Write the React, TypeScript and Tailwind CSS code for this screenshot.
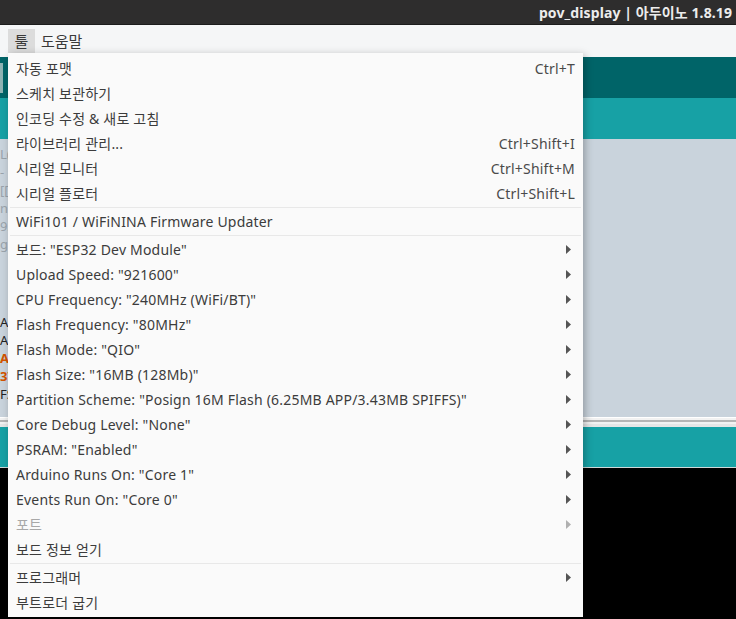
import React from 'react'

type Item =
  | { kind: 'item'; label: string; shortcut?: string; sub?: boolean; disabled?: boolean }
  | { kind: 'sep' }

const items: Item[] = [
  { kind: 'item', label: '자동 포맷', shortcut: 'Ctrl+T' },
  { kind: 'item', label: '스케치 보관하기' },
  { kind: 'item', label: '인코딩 수정 & 새로 고침' },
  { kind: 'item', label: '라이브러리 관리...', shortcut: 'Ctrl+Shift+I' },
  { kind: 'item', label: '시리얼 모니터', shortcut: 'Ctrl+Shift+M' },
  { kind: 'item', label: '시리얼 플로터', shortcut: 'Ctrl+Shift+L' },
  { kind: 'sep' },
  { kind: 'item', label: 'WiFi101 / WiFiNINA Firmware Updater' },
  { kind: 'sep' },
  { kind: 'item', label: '보드: "ESP32 Dev Module"', sub: true },
  { kind: 'item', label: 'Upload Speed: "921600"', sub: true },
  { kind: 'item', label: 'CPU Frequency: "240MHz (WiFi/BT)"', sub: true },
  { kind: 'item', label: 'Flash Frequency: "80MHz"', sub: true },
  { kind: 'item', label: 'Flash Mode: "QIO"', sub: true },
  { kind: 'item', label: 'Flash Size: "16MB (128Mb)"', sub: true },
  { kind: 'item', label: 'Partition Scheme: "Posign 16M Flash (6.25MB APP/3.43MB SPIFFS)"', sub: true },
  { kind: 'item', label: 'Core Debug Level: "None"', sub: true },
  { kind: 'item', label: 'PSRAM: "Enabled"', sub: true },
  { kind: 'item', label: 'Arduino Runs On: "Core 1"', sub: true },
  { kind: 'item', label: 'Events Run On: "Core 0"', sub: true },
  { kind: 'item', label: '포트', sub: true, disabled: true },
  { kind: 'item', label: '보드 정보 얻기' },
  { kind: 'sep' },
  { kind: 'item', label: '프로그래머', sub: true },
  { kind: 'item', label: '부트로더 굽기' },
]

function Arrow({ disabled }: { disabled?: boolean }) {
  return (
    <svg width="5" height="9" viewBox="0 0 5 9" className="shrink-0">
      <polygon points="0,0 5,4.5 0,9" fill={disabled ? '#b0b0b0' : '#555555'} />
    </svg>
  )
}

export default function App() {
  return (
    <div
      className="relative w-[736px] h-[619px] overflow-hidden flex flex-col bg-black"
      style={{ fontFamily: '"Noto Sans", "Noto Sans CJK KR", sans-serif' }}
    >
      {/* title bar */}
      <div className="h-[25px] shrink-0 bg-[#2e2d2d] border-b border-[#1c1c1c] flex items-center justify-end pr-[4px]">
        <span className="text-[14px] font-bold text-[#ececec] tracking-[0.1px]">pov_display | 아두이노 1.8.19</span>
      </div>

      {/* menu bar */}
      <div className="h-[32px] shrink-0 bg-[#f5f6f7] flex items-center pl-[8px] text-[15px] text-[#3a3a3a]">
        <div className="h-[25px] w-[27px] bg-[#dcdcdc] flex items-center justify-center">툴</div>
        <div className="ml-[6px]">도움말</div>
      </div>

      {/* toolbar */}
      <div className="h-[41px] shrink-0 bg-[#006468] flex items-center">
        <div className="w-[3px] h-[30px] bg-[#8fb3b4]" />
      </div>

      {/* tabs */}
      <div className="h-[41px] shrink-0 bg-[#17a1a5]" />

      {/* editor */}
      <div className="h-[278px] shrink-0 bg-[#c9d3dc] flex flex-col pt-[6px] text-[13px] leading-[18px] text-[#9aa3ab] whitespace-nowrap">
        <div>L(</div>
        <div>-</div>
        <div>[[</div>
        <div>n</div>
        <div>92</div>
        <div>gh</div>
        <div className="h-[60px]" />
        <div className="text-[#222]">Ac</div>
        <div className="text-[#222]">Ac</div>
        <div className="text-[#d35400] font-bold">Ac</div>
        <div className="text-[#d35400] font-bold">3T</div>
        <div className="text-[#222]">FS</div>
      </div>

      {/* divider */}
      <div className="h-[10px] shrink-0 bg-[#c9d3dc] flex flex-col">
        <div className="h-px bg-white" />
        <div className="h-[2px] bg-[#f2f2f2]" />
        <div className="h-[2px] bg-[#b5b5b5]" />
        <div className="h-[2px] bg-[#f2f2f2]" />
        <div className="flex-1 bg-[#e6e6e6]" />
      </div>

      {/* status */}
      <div className="h-[41px] shrink-0 bg-[#17a1a5] border-b border-[#cfd8d8]" />

      {/* console */}
      <div className="flex-1 bg-black" />

      {/* dropdown menu */}
      <div className="absolute left-[8px] top-[53px] w-[575px] bg-[#fafafa] pt-[3px] pb-[2px] shadow-[2px_2px_8px_rgba(0,0,0,0.28)] text-[14px] text-[#3c3c3c] tracking-[0.2px]">
        {items.map((it, i) =>
          it.kind === 'sep' ? (
            <div key={i} className="h-px bg-[#e8e8e8] my-[1px] mx-[2px]" />
          ) : (
            <div key={i} className="h-[25px] flex items-center pl-[8px] pr-[8px]">
              <span className={`flex-1 whitespace-nowrap ${it.disabled ? 'text-[#a8a8a8]' : ''}`}>{it.label}</span>
              {it.shortcut && <span className="text-[#4a4a4a]">{it.shortcut}</span>}
              {it.sub && (
                <span className="pr-[4px] flex items-center">
                  <Arrow disabled={it.disabled} />
                </span>
              )}
            </div>
          )
        )}
      </div>
    </div>
  )
}
